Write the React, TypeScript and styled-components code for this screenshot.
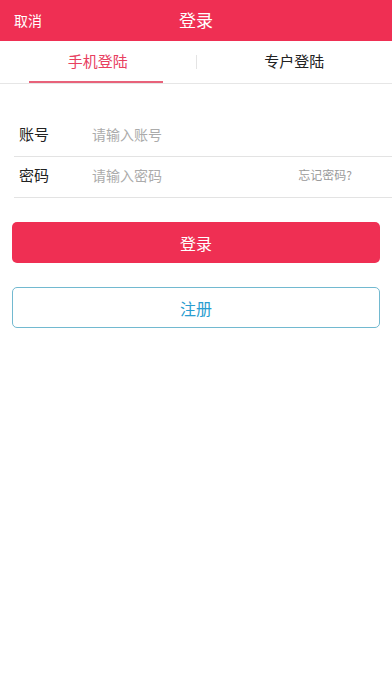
import React from "react";
import styled, { createGlobalStyle } from "styled-components";

const Global = createGlobalStyle`
  html, body { margin: 0; padding: 0; background: #fff; }
  body { font-family: "Noto Sans CJK SC", "Noto Sans", sans-serif; }
  * { box-sizing: border-box; }
`;

const Page = styled.div`
  width: 392px;
  min-height: 696px;
  background: #fff;
`;

const Header = styled.div`
  height: 41px;
  background: #ef2f53;
  display: grid;
  grid-template-columns: 1fr auto 1fr;
  align-items: center;
  padding: 0 14px 2px 14px;
  color: #fff;
`;

const Cancel = styled.span`
  font-size: 14px;
  justify-self: start;
`;

const Title = styled.span`
  font-size: 17px;
`;

const Tabs = styled.div`
  height: 43px;
  display: flex;
  align-items: stretch;
  border-bottom: 1px solid #e6e6e6;
`;

const Tab = styled.div<{ $active?: boolean }>`
  flex: 1;
  display: flex;
  align-items: center;
  justify-content: center;
  padding-bottom: 3px;
  font-size: 15px;
  color: ${(p) => (p.$active ? "#e8405f" : "#222")};
  position: relative;
  &::after {
    content: "";
    display: ${(p) => (p.$active ? "block" : "none")};
    position: absolute;
    left: 29px;
    right: 33px;
    bottom: 0;
    height: 2px;
    background: #e8627a;
  }
`;

const Divider = styled.div`
  width: 1px;
  height: 14px;
  background: #e4e4e4;
  align-self: center;
`;

const Form = styled.div`
  margin-top: 32px;
  padding-left: 14px;
`;

const Row = styled.div`
  height: 41px;
  display: flex;
  align-items: center;
  border-bottom: 1px solid #e3e3e3;
  padding: 0 40px 5px 5px;
`;

const Label = styled.span`
  width: 73px;
  font-size: 15px;
  color: #222;
`;

const Placeholder = styled.span`
  flex: 1;
  font-size: 14px;
  color: #ababab;
`;

const Forgot = styled.span`
  font-size: 12px;
  color: #9a9a9a;
`;

const Buttons = styled.div`
  padding: 24px 12px 0 12px;
  display: flex;
  flex-direction: column;
  gap: 24px;
`;

const Button = styled.div<{ $primary?: boolean }>`
  height: 41px;
  border-radius: 5px;
  display: flex;
  align-items: center;
  justify-content: center;
  font-size: 16px;
  background: ${(p) => (p.$primary ? "#ef2f53" : "#fff")};
  color: ${(p) => (p.$primary ? "#fff" : "#2a9dd0")};
  border: ${(p) => (p.$primary ? "none" : "1.5px solid #72b9d0")};
`;

export default function App() {
  return (
    <Page>
      <Global />
      <Header>
        <Cancel>取消</Cancel>
        <Title>登录</Title>
        <span />
      </Header>
      <Tabs>
        <Tab $active>手机登陆</Tab>
        <Divider />
        <Tab>专户登陆</Tab>
      </Tabs>
      <Form>
        <Row>
          <Label>账号</Label>
          <Placeholder>请输入账号</Placeholder>
        </Row>
        <Row>
          <Label>密码</Label>
          <Placeholder>请输入密码</Placeholder>
          <Forgot>忘记密码?</Forgot>
        </Row>
      </Form>
      <Buttons>
        <Button $primary>登录</Button>
        <Button>注册</Button>
      </Buttons>
    </Page>
  );
}
